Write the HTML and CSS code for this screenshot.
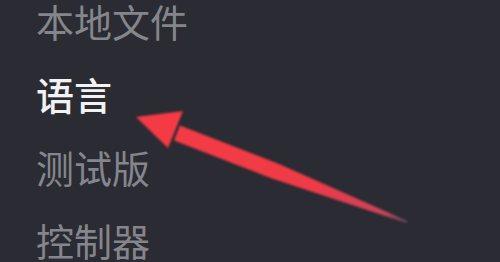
FILE: index.html
```html
<!DOCTYPE html>
<html lang="zh-CN">
<head>
  <meta charset="UTF-8">
  <meta name="viewport" content="width=device-width, initial-scale=1">
  <title>设置</title>
  <link rel="stylesheet" href="styles.css">
</head>
<body>
  <nav class="settings-menu">
    <a class="menu-item">本地文件</a>
    <a class="menu-item active">语言</a>
    <a class="menu-item">测试版</a>
    <a class="menu-item">控制器</a>
  </nav>

  <!-- Roter Pfeil als Markierung -->
  <svg class="arrow" width="500" height="262" viewBox="0 0 500 262">
    <defs>
      <linearGradient id="shaft" gradientUnits="userSpaceOnUse" x1="177" y1="133" x2="407" y2="222">
        <stop offset="0" stop-color="#f43a45"/>
        <stop offset="0.6" stop-color="#ef3a46"/>
        <stop offset="0.9" stop-color="#c9445a"/>
        <stop offset="1" stop-color="#8d5468" stop-opacity="0.6"/>
      </linearGradient>
      <filter id="soft" x="-10%" y="-10%" width="120%" height="120%">
        <feGaussianBlur stdDeviation="0.9"/>
      </filter>
    </defs>
    <g filter="url(#soft)">
      <polygon points="179.9,125.5 277.9,163.5 407.4,221.1 406.6,222.9 272.1,178.5 174.1,140.5" fill="url(#shaft)"/>
      <polygon points="136,117 183,111 168,148" fill="#f43a45"/>
    </g>
  </svg>
</body>
</html>
```

FILE: styles.css
```css
:root {
  --bg: #2a2b33;
  --text-muted: #85868c;
  --text-active: #f2f2f2;
}

* {
  margin: 0;
  padding: 0;
  box-sizing: border-box;
}

body {
  background-color: var(--bg);
  font-family: "Noto Sans CJK SC", "Noto Sans", sans-serif;
  width: 500px;
  height: 262px;
  overflow: hidden;
  position: relative;
}

.settings-menu {
  display: flex;
  flex-direction: column;
  padding: 0 0 0 36px;
  margin-top: -16px;
}

.menu-item {
  font-size: 38px;
  line-height: 73px;
  color: var(--text-muted);
}

.menu-item.active {
  color: var(--text-active);
  font-weight: 500;
}

.arrow {
  position: absolute;
  top: 0;
  left: 0;
}
```
